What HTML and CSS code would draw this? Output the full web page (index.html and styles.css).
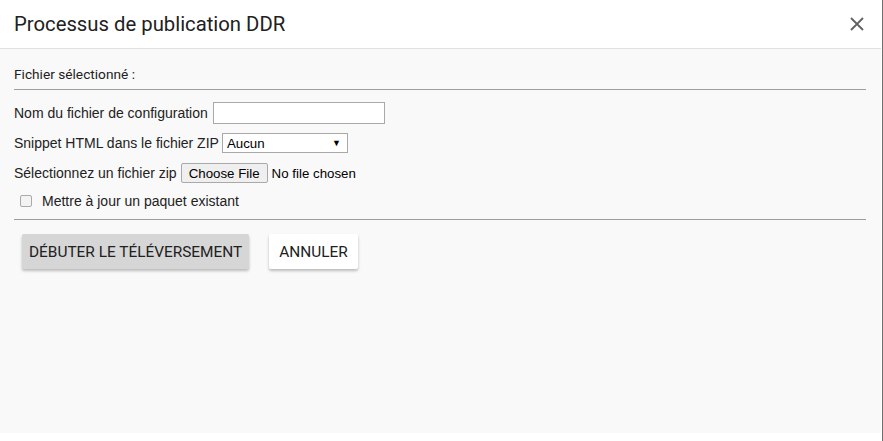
FILE: index.html
```html
<!DOCTYPE html>
<html lang="fr">
<head>
<meta charset="utf-8">
<title>Processus de publication DDR</title>
<link rel="stylesheet" href="styles.css">
</head>
<body>
<div class="page">
  <div class="modal">
    <div class="modal-header">
      <h2 class="modal-title">Processus de publication DDR</h2>
      <button class="close" aria-label="Fermer">
        <svg width="14" height="14" viewBox="0 0 14 14"><path d="M1 1 L13 13 M13 1 L1 13" stroke="#616161" stroke-width="1.8" fill="none"/></svg>
      </button>
    </div>
    <div class="modal-body">
      <div class="selected">Fichier sélectionné :</div>
      <hr class="sep">
      <div class="form">
        <div class="row">
          <label class="lbl">Nom du fichier de configuration</label>
          <input class="text-input" type="text">
        </div>
        <div class="row">
          <label class="lbl">Snippet HTML dans le fichier ZIP</label>
          <span class="select">Aucun<span class="arrow">▼</span></span>
        </div>
        <div class="row">
          <label class="lbl">Sélectionnez un fichier zip</label>
          <span class="file-btn">Choose File</span>
          <span class="file-name">No file chosen</span>
        </div>
        <div class="row check-row">
          <span class="checkbox"></span>
          <label class="lbl">Mettre à jour un paquet existant</label>
        </div>
      </div>
      <hr class="sep sep2">
      <div class="actions">
        <button class="btn btn-primary">DÉBUTER LE TÉLÉVERSEMENT</button>
        <button class="btn btn-flat">ANNULER</button>
      </div>
    </div>
  </div>
</div>
</body>
</html>
```

FILE: styles.css
```css
html, body {
  margin: 0;
  padding: 0;
  background: #ffffff;
}
.page {
  width: 882px;
  height: 441px;
  border-right: 1px solid #6f6f6f;
}
.modal {
  width: 881px;
  height: 433px;
  background: #f9f9f9;
  display: flex;
  flex-direction: column;
}
.modal-header {
  height: 48px;
  background: #ffffff;
  border-bottom: 1px solid #e0e0e0;
  display: flex;
  align-items: center;
  justify-content: space-between;
  padding: 0 17px 0 14px;
  box-sizing: content-box;
}
.modal-title {
  margin: 0;
  font-family: Roboto, "Liberation Sans", sans-serif;
  font-weight: 400;
  font-size: 20.3px;
  color: #212121;
}
.close {
  border: 0;
  background: transparent;
  padding: 0;
  width: 14px;
  height: 14px;
  display: flex;
}
.modal-body {
  padding: 16px 15px 0 14px;
  font-family: "Liberation Sans", Arial, sans-serif;
  font-size: 14px;
  color: #222;
}
.selected {
  font-family: Roboto, "Liberation Sans", sans-serif;
  font-size: 13.7px;
  color: #212121;
  line-height: 18px;
}
.sep {
  margin: 6px 0 0 0;
  border: 0;
  border-top: 1px solid #9e9e9e;
  height: 0;
}
.sep2 {
  margin-top: 0;
}
.form {
  padding-top: 12px;
  display: flex;
  flex-direction: column;
  gap: 8px;
  padding-bottom: 10px;
}
.row {
  display: flex;
  align-items: center;
  gap: 5px;
  height: 22px;
}
.lbl {
  white-space: nowrap;
}
.text-input {
  width: 168px;
  height: 18px;
  border: 1px solid #a9a9a9;
  padding: 1px;
  margin: 0;
  background: #fff;
}
.select {
  display: inline-flex;
  align-items: center;
  justify-content: space-between;
  width: 114px;
  height: 18px;
  border: 1px solid #a9a9a9;
  background: #fff;
  padding: 0 6px 0 4px;
  font-size: 13.3px;
  color: #000;
  margin-left: -2px;
}
.arrow {
  font-size: 9px;
}
.file-btn {
  display: inline-flex;
  align-items: center;
  height: 18px;
  padding: 0 7px;
  background: #efefef;
  border: 1px solid #a9a9a9;
  border-radius: 2px;
  color: #000;
  font-size: 13.3px;
  margin-left: -1px;
}
.file-name {
  color: #000;
  font-size: 13.3px;
  margin-left: -1px;
}
.check-row {
  padding-left: 6px;
  gap: 10px;
  height: 17px;
  margin-top: 0;
}
.checkbox {
  width: 10px;
  height: 10px;
  border: 1px solid #aaa;
  border-radius: 2px;
  background: #f3f3f3;
}
.actions {
  display: flex;
  gap: 20px;
  padding: 14px 8px;
}
.btn {
  font-family: Roboto, "Liberation Sans", sans-serif;
  font-size: 15.4px;
  color: #212121;
  border: 0;
  border-radius: 2px;
  height: 35px;
  padding: 0 7px;
  box-shadow: 0 2px 3px rgba(0,0,0,0.25);
}
.btn-primary {
  background: #d6d6d6;
}
.btn-flat {
  background: #ffffff;
  padding: 0 10px;
}
```
